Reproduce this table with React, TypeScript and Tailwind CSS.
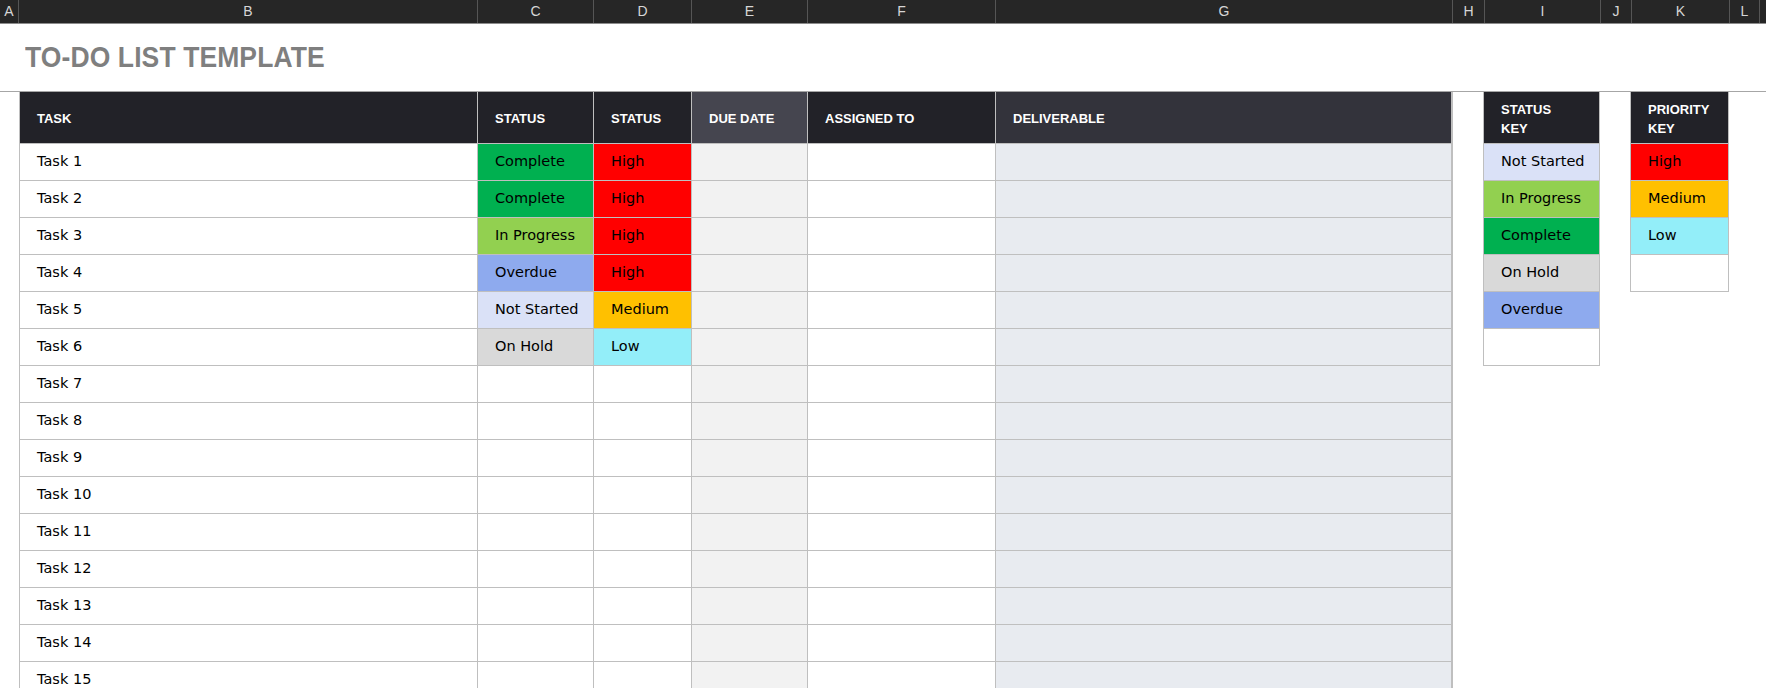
import React from 'react';

const colLetters: { l: string; w: string }[] = [
  { l: 'A', w: 'w-[19px]' },
  { l: 'B', w: 'w-[459px]' },
  { l: 'C', w: 'w-[116px]' },
  { l: 'D', w: 'w-[98px]' },
  { l: 'E', w: 'w-[116px]' },
  { l: 'F', w: 'w-[188px]' },
  { l: 'G', w: 'w-[457px]' },
  { l: 'H', w: 'w-[32px]' },
  { l: 'I', w: 'w-[116px]' },
  { l: 'J', w: 'w-[31px]' },
  { l: 'K', w: 'w-[98px]' },
  { l: 'L', w: 'w-[30px]' },
];

const statusColor: Record<string, string> = {
  Complete: 'bg-[#00b050]',
  'In Progress': 'bg-[#92d050]',
  Overdue: 'bg-[#8eaaee]',
  'Not Started': 'bg-[#dae1f7]',
  'On Hold': 'bg-[#d9d9d9]',
};

const priorityColor: Record<string, string> = {
  High: 'bg-[#ff0000]',
  Medium: 'bg-[#ffc000]',
  Low: 'bg-[#93eef9]',
};

const tasks: { status?: string; priority?: string }[] = [
  { status: 'Complete', priority: 'High' },
  { status: 'Complete', priority: 'High' },
  { status: 'In Progress', priority: 'High' },
  { status: 'Overdue', priority: 'High' },
  { status: 'Not Started', priority: 'Medium' },
  { status: 'On Hold', priority: 'Low' },
  {}, {}, {}, {}, {}, {}, {}, {}, {},
];

const cell = "h-[37px] flex items-center pl-[17px] border-r border-b border-[#bfbfbf] text-[14.5px] text-black";
const head = "h-[52px] flex items-center pl-[17px] pt-[2px] border-r border-b border-[#bfbfbf] text-[13px] font-bold text-white uppercase leading-[19px]";

function KeyTable({ title, items, colors, rows }: { title: string; items: string[]; colors: Record<string, string>; rows: number }) {
  return (
    <div className="flex flex-col border-l border-[#bfbfbf]">
      <div className={`${head} bg-[#222228] font-['Liberation_Sans',sans-serif]`}>
        <span>{title}<br />KEY</span>
      </div>
      {Array.from({ length: rows }).map((_, i) => (
        <div key={i} className={`${cell} ${items[i] ? colors[items[i]] : 'bg-white'}`}>{items[i] ?? ''}</div>
      ))}
    </div>
  );
}

export default function App() {
  return (
    <div className="w-[1766px] h-[688px] overflow-hidden bg-white font-['DejaVu_Sans',sans-serif]">
      {/* column letters */}
      <div className="flex h-[24px] bg-[#262626] border-b border-[#8c8c8c] font-['Liberation_Sans',sans-serif] text-[14px] text-[#d6d6d6]">
        {colLetters.map((c) => (
          <div key={c.l} className={`${c.w} h-full flex items-center justify-center border-r border-[#555555]`}>{c.l}</div>
        ))}
        <div className="flex-1" />
      </div>

      {/* title */}
      <div className="h-[68px] flex items-center pl-[25px] pt-[1px] border-b border-[#a6a6a6]">
        <h1 className="font-['Liberation_Sans',sans-serif] font-bold text-[26.5px] text-[#7f7f7f] tracking-[0.1px] scale-y-[1.1] origin-left">TO-DO LIST TEMPLATE</h1>
      </div>

      <div className="flex items-start">
        <div className="w-[19px]" />

        {/* main table */}
        <div className="grid grid-cols-[459px_116px_98px_116px_188px_457px]">
          <div className={`${head} bg-[#222228] border-l font-['Liberation_Sans',sans-serif]`}>Task</div>
          <div className={`${head} bg-[#222228] font-['Liberation_Sans',sans-serif]`}>Status</div>
          <div className={`${head} bg-[#222228] font-['Liberation_Sans',sans-serif]`}>Status</div>
          <div className={`${head} bg-[#45454f] font-['Liberation_Sans',sans-serif]`}>Due Date</div>
          <div className={`${head} bg-[#222228] font-['Liberation_Sans',sans-serif]`}>Assigned To</div>
          <div className={`${head} bg-[#33333b] border-r-2 font-['Liberation_Sans',sans-serif]`}>Deliverable</div>

          {tasks.map((t, i) => (
            <React.Fragment key={i}>
              <div className={`${cell} border-l bg-white`}>Task {i + 1}</div>
              <div className={`${cell} ${t.status ? statusColor[t.status] : 'bg-white'}`}>{t.status ?? ''}</div>
              <div className={`${cell} ${t.priority ? priorityColor[t.priority] : 'bg-white'}`}>{t.priority ?? ''}</div>
              <div className={`${cell} bg-[#f2f2f2]`} />
              <div className={`${cell} bg-white`} />
              <div className={`${cell} bg-[#e8ebf0] border-r-2`} />
            </React.Fragment>
          ))}
        </div>

        <div className="w-[30px]" />
        <div className="w-[117px]">
          <KeyTable title="Status" items={['Not Started', 'In Progress', 'Complete', 'On Hold', 'Overdue']} colors={statusColor} rows={6} />
        </div>
        <div className="w-[30px]" />
        <div className="w-[99px]">
          <KeyTable title="Priority" items={['High', 'Medium', 'Low']} colors={priorityColor} rows={4} />
        </div>
      </div>
    </div>
  );
}
